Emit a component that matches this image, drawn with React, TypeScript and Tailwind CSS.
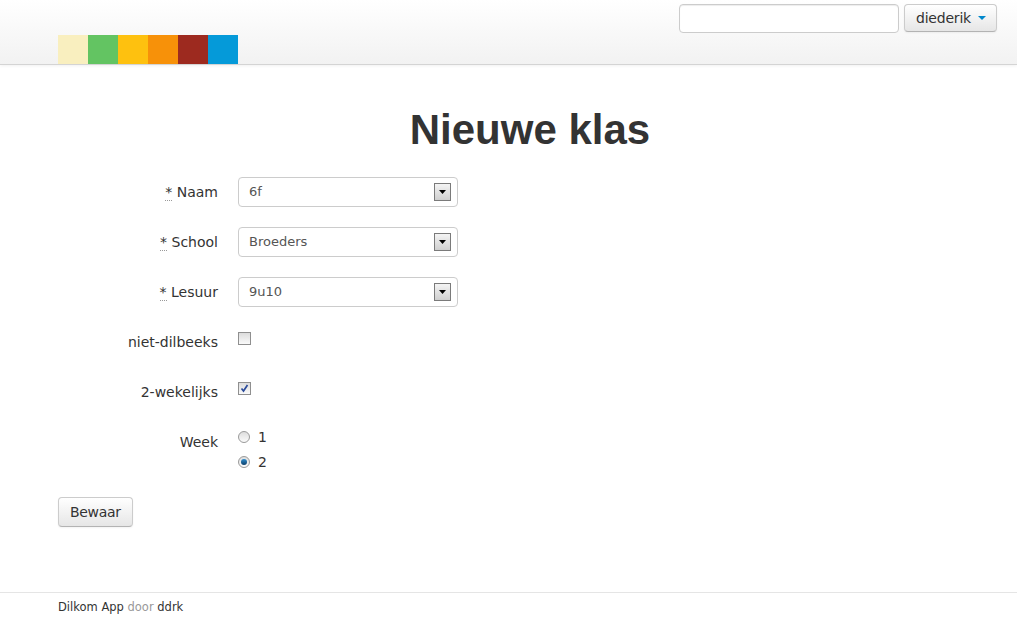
const squares = ["bg-[#f9efbf]", "bg-[#63c462]", "bg-[#fec10f]", "bg-[#f79109]", "bg-[#9d2a1f]", "bg-[#059ad9]"];

const FakeSelect = ({ value }: { value: string }) => (
  <div className="flex items-center justify-between w-[220px] h-[30px] border border-[#cccccc] rounded-[4px] bg-white pl-[10px] pr-[6px]">
    <span className="text-[13px] text-[#555555]">{value}</span>
    <span className="flex items-center justify-center w-[17px] h-[18px] border border-[#7a7a7a] bg-gradient-to-b from-[#f4f4f4] to-[#cfcfcf]">
      <svg width="7" height="4" viewBox="0 0 7 4">
        <path d="M0 0h7L3.5 4z" fill="#000" />
      </svg>
    </span>
  </div>
);

const Checkbox = ({ checked }: { checked?: boolean }) => (
  <span className="flex items-center justify-center w-[13px] h-[13px] border border-[#8f8f8f] bg-gradient-to-b from-[#dcdcdc] to-[#fafafa]">
    {checked && (
      <svg width="9" height="9" viewBox="0 0 9 9">
        <path d="M1.5 4.5l2 2.5L7.5 1" fill="none" stroke="#2a4a9a" strokeWidth="1.7" />
      </svg>
    )}
  </span>
);

const Radio = ({ checked }: { checked?: boolean }) => (
  <span className="flex items-center justify-center w-[12px] h-[12px] rounded-full border border-[#9a9a9a] bg-gradient-to-b from-[#dedede] to-[#fbfbfb]">
    {checked && <span className="w-[6px] h-[6px] rounded-full bg-gradient-to-b from-[#2f8fcf] to-[#0d3f6a]" />}
  </span>
);

const Req = ({ text }: { text: string }) => (
  <>
    <span className="border-b border-dotted border-[#999999] leading-[15px]">*</span> {text}
  </>
);

const Row = ({ label, children }: { label: React.ReactNode; children: React.ReactNode }) => (
  <div className="flex gap-[20px]">
    <div className="w-[160px] text-right leading-[30px]">{label}</div>
    <div>{children}</div>
  </div>
);

export default function App() {
  return (
    <div className="min-h-[637px] bg-white text-[#333333] text-[14px]" style={{ fontFamily: '"DejaVu Sans", Verdana, sans-serif' }}>
      <header className="h-[65px] flex justify-between border-b border-[#d4d4d4] bg-gradient-to-b from-white to-[#f2f2f2] shadow-[0_1px_3px_rgba(0,0,0,0.06)]">
        <div className="flex self-end pl-[58px]">
          {squares.map((c) => (
            <span key={c} className={`w-[30px] h-[29px] ${c}`} />
          ))}
        </div>
        <div className="flex gap-[5px] pt-[4px] pr-[20px]">
          <input className="w-[220px] h-[29px] border border-[#cccccc] rounded-[4px] bg-white shadow-[inset_0_1px_1px_rgba(0,0,0,0.075)]" />
          <button className="flex items-center gap-[7px] h-[28px] pl-[11px] pr-[10px] border border-[#cccccc] border-b-[#b3b3b3] rounded-[4px] bg-gradient-to-b from-white to-[#e6e6e6] text-[14px] text-[#333333] shadow-[0_1px_2px_rgba(0,0,0,0.05)]">
            <span className="tracking-[-0.2px]">diederik</span>
            <svg width="8" height="4" viewBox="0 0 8 4">
              <path d="M0 0h8L4 4z" fill="#0088cc" />
            </svg>
          </button>
        </div>
      </header>

      <main className="pl-[58px] pr-[15px] pt-[41px]">
        <h1 className="text-center text-[42px] leading-[48px] font-bold text-[#333333]" style={{ fontFamily: '"Liberation Sans", Arial, sans-serif' }}>
          Nieuwe klas
        </h1>

        <div className="mt-[23px] flex flex-col gap-[20px]">
          <Row label={<Req text="Naam" />}>
            <FakeSelect value="6f" />
          </Row>
          <Row label={<Req text="School" />}>
            <FakeSelect value="Broeders" />
          </Row>
          <Row label={<Req text="Lesuur" />}>
            <FakeSelect value="9u10" />
          </Row>
          <Row label="niet-dilbeeks">
            <div className="pt-[5px]">
              <Checkbox />
            </div>
          </Row>
          <Row label="2-wekelijks">
            <div className="pt-[5px]">
              <Checkbox checked />
            </div>
          </Row>
          <Row label="Week">
            <div className="flex flex-col gap-[5px]">
              <label className="flex items-center gap-[8px] h-[20px]">
                <Radio />
                <span>1</span>
              </label>
              <label className="flex items-center gap-[8px] h-[20px]">
                <Radio checked />
                <span>2</span>
              </label>
            </div>
          </Row>
          <div className="mt-[5px]">
            <button className="h-[30px] px-[11px] border border-[#cccccc] border-b-[#b3b3b3] rounded-[4px] bg-gradient-to-b from-white to-[#e6e6e6] text-[14px] text-[#333333] tracking-[-0.3px] shadow-[0_1px_2px_rgba(0,0,0,0.05)]">
              Bewaar
            </button>
          </div>
        </div>
      </main>

      <footer className="mt-[65px] border-t border-[#e5e5e5] pl-[58px] pt-[7px] text-[11.5px] leading-[15px] text-[#333333]">
        Dilkom App <span className="text-[#999999]">door</span> ddrk
      </footer>
    </div>
  );
}
